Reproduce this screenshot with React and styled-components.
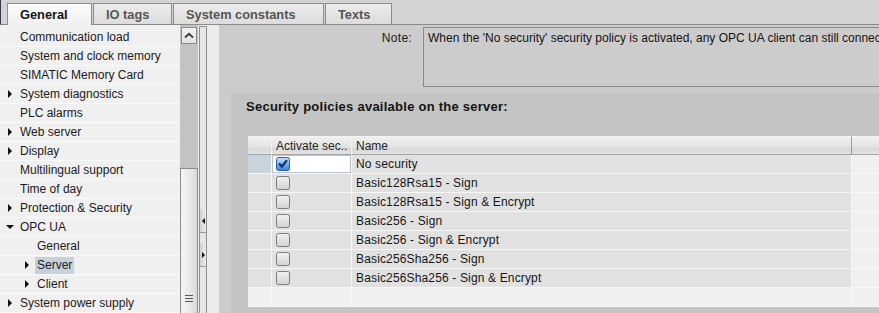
import React from 'react';
import styled, { createGlobalStyle } from 'styled-components';

const GlobalStyle = createGlobalStyle`
  html, body { margin: 0; padding: 0; }
  body {
    background: #cccccc;
    font-family: "Liberation Sans", Arial, sans-serif;
    overflow: hidden;
  }
  #root { width: 879px; height: 313px; overflow: hidden; }
`;

const Frame = styled.div`
  display: flex;
  flex-direction: column;
  width: 879px;
  height: 313px;
  overflow: hidden;
  background: #cccccc;
`;

const TabBar = styled.div`
  display: flex;
  align-items: flex-end;
  gap: 1px;
  height: 25px;
  box-sizing: border-box;
  padding-left: 6px;
  border-left: 1px solid #353845;
  border-bottom: 1px solid #8a8a8a;
  background: #d3d3d3;
  flex-shrink: 0;
`;

const Tab = styled.div`
  box-sizing: border-box;
  width: ${p => p.$w}px;
  height: ${p => (p.$active ? 22 : 21)}px;
  margin-bottom: ${p => (p.$active ? -1 : 0)}px;
  padding-left: 12px;
  display: flex;
  align-items: center;
  border: 1px solid #8c8c8c;
  border-bottom: none;
  background: ${p =>
    p.$active
      ? 'linear-gradient(#fbfbfb, #f0f0f0)'
      : 'linear-gradient(#ececec, #dcdcdc)'};
  color: ${p => (p.$active ? '#151515' : '#555555')};
  font-weight: bold;
  font-size: 12.8px;
  white-space: nowrap;
`;

const Body = styled.div`
  display: flex;
  flex: 1;
  min-height: 0;
`;

const Tree = styled.div`
  width: 180px;
  flex-shrink: 0;
  background: #f0f0f0;
  padding-top: 3px;
  box-sizing: border-box;
  overflow: hidden;
`;

const TreeRow = styled.div`
  height: 19px;
  box-sizing: border-box;
  border-bottom: 1px solid #fbfbfb;
  display: flex;
  align-items: center;
  padding-left: ${p => (p.$level ? 24 : 7)}px;
  font-size: 12px;
  color: #1b1b1b;
  white-space: nowrap;
`;

const Twisty = styled.span`
  width: 13px;
  flex-shrink: 0;
  display: flex;
  align-items: center;
  &::before {
    content: '';
    display: ${p => (p.$kind ? 'block' : 'none')};
    width: 0;
    height: 0;
    ${p =>
      p.$kind === 'open'
        ? 'border-left: 4px solid transparent; border-right: 4px solid transparent; border-top: 4px solid #111; margin-left: -1px;'
        : 'border-top: 4px solid transparent; border-bottom: 4px solid transparent; border-left: 4px solid #111; margin-left: 1px;'}
  }
`;

const Label = styled.span`
  padding: 1px 2px;
  margin-left: -2px;
  background: ${p => (p.$selected ? '#c6d1db' : 'transparent')};
  line-height: 15px;
`;

const Scrollbar = styled.div`
  width: 18px;
  flex-shrink: 0;
  background: #c3c3c3;
  display: flex;
  flex-direction: column;
  padding: 2px 0 0 1px;
  box-sizing: border-box;
`;

const ScrollButton = styled.div`
  width: 16px;
  height: 17px;
  box-sizing: border-box;
  border: 1px solid #8a8a8a;
  background: linear-gradient(#f2f2f2, #e2e2e2);
  display: flex;
  align-items: center;
  justify-content: center;
`;

const Thumb = styled.div`
  margin-top: auto;
  margin-left: -1px;
  width: 18px;
  height: 145px;
  box-sizing: border-box;
  border: 1px solid #8c8c8c;
  border-bottom: none;
  background: linear-gradient(90deg, #f6f6f6, #e4e4e4 70%, #d8d8d8);
  display: flex;
  align-items: flex-end;
  justify-content: center;
  padding-bottom: 11px;
`;

const Grip = styled.div`
  width: 8px;
  height: 7px;
  background: repeating-linear-gradient(#5a5a5a 0 1px, transparent 1px 3px);
`;

const SplitArea = styled.div`
  width: 21px;
  flex-shrink: 0;
  background: #ececec;
  padding: 1px 0 0 1px;
  box-sizing: border-box;
  display: flex;
`;

const SplitBar = styled.div`
  width: 8px;
  box-sizing: border-box;
  border-left: 1px solid #8e8e8e;
  border-right: 1px solid #8e8e8e;
  border-top: 1px solid #8e8e8e;
  background: #e6e6e6;
  display: flex;
  flex-direction: column;
  padding-top: 182px;
  gap: 10px;
`;

const SplitButton = styled.div`
  height: 24px;
  box-sizing: border-box;
  border-bottom: 1px solid #9a9a9a;
  background: linear-gradient(90deg, #d0d0d0, #ececec);
  display: flex;
  align-items: center;
  justify-content: center;
  &::before {
    content: '';
    width: 0;
    height: 0;
    border-top: 3px solid transparent;
    border-bottom: 3px solid transparent;
    ${p =>
      p.$dir === 'left'
        ? 'border-right: 3px solid #111;'
        : 'border-left: 3px solid #111;'}
  }
`;

const Content = styled.div`
  flex: 1;
  min-width: 0;
  background: #cccccc;
  display: flex;
  flex-direction: column;
  overflow: hidden;
`;

const NoteRow = styled.div`
  display: flex;
  padding-top: 2px;
  gap: 11px;
`;

const NoteLabel = styled.div`
  width: 193px;
  flex-shrink: 0;
  text-align: right;
  font-size: 12px;
  color: #1b1b1b;
  padding-top: 4px;
  letter-spacing: 0.3px;
`;

const NoteBox = styled.div`
  width: 520px;
  flex-shrink: 0;
  height: 60px;
  box-sizing: border-box;
  border: 1px solid #8a8a8a;
  padding: 3px 4px;
  font-size: 12px;
  color: #141414;
  white-space: nowrap;
  overflow: hidden;
`;

const Section = styled.div`
  flex: 1;
  margin: 6px 0 0 12px;
  background: #c4c4c4;
  padding: 6px 0 0 17px;
  overflow: hidden;
`;

const Heading = styled.div`
  margin-left: -2px;
  font-size: 13px;
  font-weight: bold;
  letter-spacing: 0.25px;
  line-height: 16px;
  color: #141414;
`;

const Grid = styled.div`
  margin-top: 21px;
  display: grid;
  grid-template-columns: 24px 80px 500px 80px;
`;

const HeadCell = styled.div`
  height: 19px;
  box-sizing: border-box;
  border-top: 1px solid #f4f4f4;
  border-bottom: 1px solid #a6a6a6;
  border-right: 1px solid ${p => (p.$dark ? '#9a9a9a' : '#f2f2f2')};
  background: linear-gradient(#f0f0f0, #e4e4e4 55%, #d9d9d9 70%, #e2e2e2);
  font-size: 12px;
  color: #262626;
  padding-left: 4px;
  display: flex;
  align-items: center;
  white-space: nowrap;
  overflow: hidden;
`;

const cellBg = p => {
  if (p.$focus) return '#ffffff';
  if (p.$sel) return '#c7d3dd';
  if (p.$light) return '#f0f0f0';
  return '#e1e1e1';
};

const Cell = styled.div`
  height: 19px;
  box-sizing: border-box;
  border-bottom: 1px solid #f7f7f7;
  border-right: 1px solid #f7f7f7;
  background: ${cellBg};
  ${p => (p.$focus ? 'box-shadow: inset 0 0 0 1px #b3c3d3;' : '')}
  font-size: 12px;
  color: #161616;
  padding-left: 4px;
  display: flex;
  align-items: center;
  white-space: nowrap;
  letter-spacing: 0.15px;
`;

const Check = ({ checked }) => (
  <svg width="14" height="14" viewBox="0 0 14 14">
    <defs>
      <linearGradient id="cbOff" x1="0" y1="0" x2="0" y2="1">
        <stop offset="0" stopColor="#f2f2f2" />
        <stop offset="1" stopColor="#d2d2d2" />
      </linearGradient>
      <linearGradient id="cbOn" x1="0" y1="0" x2="0" y2="1">
        <stop offset="0" stopColor="#cfe8fb" />
        <stop offset="0.5" stopColor="#6fb4ec" />
        <stop offset="1" stopColor="#2f86d6" />
      </linearGradient>
    </defs>
    <rect
      x="0.5"
      y="0.5"
      width="13"
      height="13"
      rx="2"
      fill={checked ? 'url(#cbOn)' : 'url(#cbOff)'}
      stroke={checked ? '#2d5f99' : '#7c7c7c'}
    />
    {checked && (
      <path d="M3 6.5 L5.8 9.5 L11 3.2" fill="none" stroke="#15306b" strokeWidth="2.2" />
    )}
  </svg>
);

const tabs = [
  { name: 'General', w: 85, active: true },
  { name: 'IO tags', w: 79 },
  { name: 'System constants', w: 151 },
  { name: 'Texts', w: 67 },
];

const treeItems = [
  { t: 'Communication load' },
  { t: 'System and clock memory' },
  { t: 'SIMATIC Memory Card' },
  { t: 'System diagnostics', k: 'closed' },
  { t: 'PLC alarms' },
  { t: 'Web server', k: 'closed' },
  { t: 'Display', k: 'closed' },
  { t: 'Multilingual support' },
  { t: 'Time of day' },
  { t: 'Protection & Security', k: 'closed' },
  { t: 'OPC UA', k: 'open' },
  { t: 'General', l: 1 },
  { t: 'Server', l: 1, k: 'closed', sel: true },
  { t: 'Client', l: 1, k: 'closed' },
  { t: 'System power supply', k: 'closed' },
];

const policies = [
  { name: 'No security', on: true },
  { name: 'Basic128Rsa15 - Sign' },
  { name: 'Basic128Rsa15 - Sign & Encrypt' },
  { name: 'Basic256 - Sign' },
  { name: 'Basic256 - Sign & Encrypt' },
  { name: 'Basic256Sha256 - Sign' },
  { name: 'Basic256Sha256 - Sign & Encrypt' },
];

export default function App() {
  return (
    <Frame>
      <GlobalStyle />
      <TabBar>
        {tabs.map(t => (
          <Tab key={t.name} $w={t.w} $active={t.active}>
            {t.name}
          </Tab>
        ))}
      </TabBar>
      <Body>
        <Tree>
          {treeItems.map((it, i) => (
            <TreeRow key={i} $level={it.l}>
              <Twisty $kind={it.k} />
              <Label $selected={it.sel}>{it.t}</Label>
            </TreeRow>
          ))}
        </Tree>
        <Scrollbar>
          <ScrollButton>
            <svg width="10" height="7" viewBox="0 0 10 7">
              <path d="M1 5.5 L5 1.8 L9 5.5" fill="none" stroke="#3a3a3a" strokeWidth="1.8" />
            </svg>
          </ScrollButton>
          <Thumb>
            <Grip />
          </Thumb>
        </Scrollbar>
        <SplitArea>
          <SplitBar>
            <SplitButton $dir="left" />
            <SplitButton $dir="right" />
          </SplitBar>
        </SplitArea>
        <Content>
          <NoteRow>
            <NoteLabel>Note:</NoteLabel>
            <NoteBox>
              When the 'No security' security policy is activated, any OPC UA client can still connect to the server.
            </NoteBox>
          </NoteRow>
          <Section>
            <Heading>Security policies available on the server:</Heading>
            <Grid>
              <HeadCell />
              <HeadCell>Activate sec..</HeadCell>
              <HeadCell $dark>Name</HeadCell>
              <HeadCell />
              {policies.map((p, i) => (
                <React.Fragment key={p.name}>
                  <Cell $sel={i === 0} />
                  <Cell $focus={i === 0}>
                    <Check checked={p.on} />
                  </Cell>
                  <Cell>{p.name}</Cell>
                  <Cell $light />
                </React.Fragment>
              ))}
              <Cell $light />
              <Cell $light />
              <Cell $light />
              <Cell $light />
            </Grid>
          </Section>
        </Content>
      </Body>
    </Frame>
  );
}
